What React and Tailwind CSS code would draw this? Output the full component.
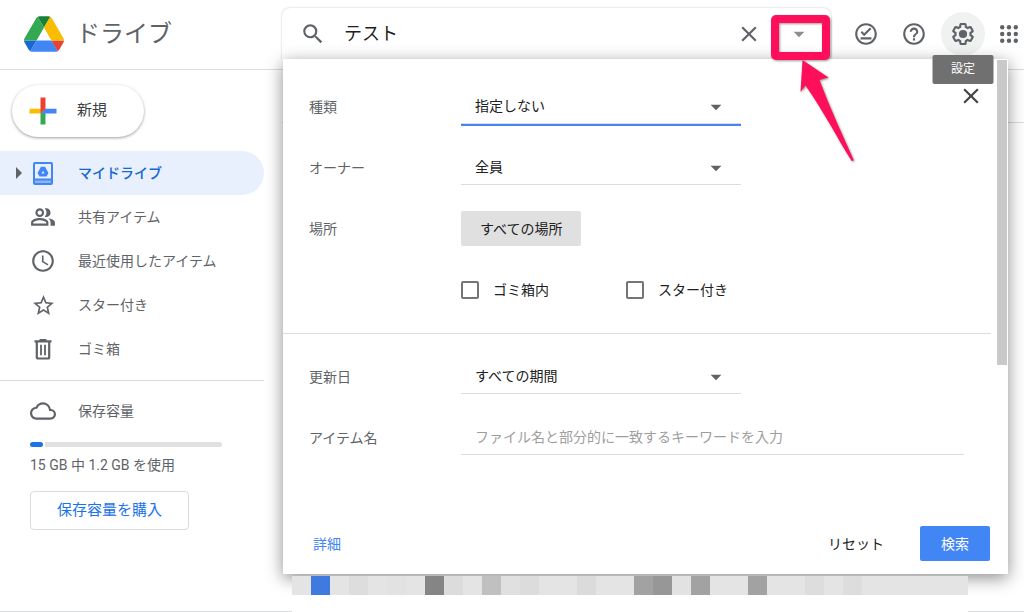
import { useState } from 'react';
import {
  MdAccessTime,
  MdArrowDropDown,
  MdClose,
  MdHelpOutline,
  MdInfoOutline,
  MdOutlineCloud,
  MdOutlineOfflinePin,
  MdOutlinePeopleAlt,
  MdSearch,
  MdStarBorder,
} from 'react-icons/md';

function DriveLogo() {
  return (
    <svg viewBox="0 0 87.3 78" className="w-10 h-9 shrink-0" aria-hidden="true">
      <path fill="#1967d2" d="m6.6 66.85 3.85 6.65c.8 1.4 1.95 2.5 3.3 3.3l13.75-23.8h-27.5c0 1.55.4 3.1 1.2 4.5z" />
      <path fill="#34a853" d="m43.65 25-13.75-23.8c-1.35.8-2.5 1.9-3.3 3.3l-25.4 44a9.06 9.06 0 0 0-1.2 4.5h27.5z" />
      <path fill="#ea4335" d="m73.55 76.8c1.35-.8 2.5-1.9 3.3-3.3l1.6-2.75 7.65-13.25c.8-1.4 1.2-2.95 1.2-4.5h-27.5l5.85 11.5z" />
      <path fill="#188038" d="m43.65 25 13.75-23.8c-1.35-.8-2.9-1.2-4.5-1.2h-18.5c-1.6 0-3.15.45-4.5 1.2z" />
      <path fill="#4285f4" d="m59.8 53h-32.3l-13.75 23.8c1.35.8 2.9 1.2 4.5 1.2h50.8c1.6 0 3.15-.45 4.5-1.2z" />
      <path fill="#fbbc04" d="m73.4 26.5-12.7-22c-.8-1.4-1.95-2.5-3.3-3.3l-13.75 23.8 16.15 28h27.45c0-1.55-.4-3.1-1.2-4.5z" />
    </svg>
  );
}

function PlusIcon() {
  return (
    <svg viewBox="0 0 36 36" className="w-9 h-9 shrink-0" aria-hidden="true">
      <path fill="#34a853" d="M15.500 17v14.500h5V20z" />
      <path fill="#4285f4" d="M31.500 15.800H20l-4.500 4.700h16z" />
      <path fill="#fbbc04" d="M4.500 15.800v4.700h11l4.500-4.700z" />
      <path fill="#ea4335" d="M20.500 15.800V4.500h-5v16z" />
    </svg>
  );
}

function GearIcon() {
  return (
    <svg viewBox="0 0 24 24" fill="currentColor" className="w-[26px] h-[26px]" aria-hidden="true">
      <path d="M13.85 22.25h-3.7c-.74 0-1.36-.54-1.45-1.27l-.27-1.89c-.27-.14-.53-.29-.79-.46l-1.8.72c-.7.26-1.47-.03-1.81-.65L2.2 15.53c-.35-.66-.2-1.44.36-1.88l1.53-1.19c-.01-.15-.02-.3-.02-.46 0-.15.01-.31.02-.46l-1.52-1.19c-.59-.45-.74-1.26-.37-1.88l1.85-3.19c.34-.62 1.11-.9 1.79-.63l1.81.73c.26-.17.52-.32.78-.46l.27-1.91c.09-.7.71-1.25 1.44-1.25h3.7c.74 0 1.36.54 1.45 1.27l.27 1.89c.27.14.53.29.79.46l1.8-.72c.71-.26 1.48.03 1.82.65l1.84 3.18c.36.66.2 1.44-.36 1.88l-1.52 1.19c.01.15.02.3.02.46s-.01.31-.02.46l1.52 1.19c.56.45.72 1.23.37 1.86l-1.86 3.22c-.34.62-1.11.9-1.8.63l-1.8-.72c-.26.17-.52.32-.78.46l-.27 1.91c-.1.68-.72 1.22-1.46 1.22zm-3.23-2h2.76l.37-2.55.53-.22c.44-.18.88-.44 1.34-.78l.45-.34 2.38.96 1.38-2.4-2.03-1.58.07-.56c.03-.26.06-.51.06-.78s-.03-.53-.06-.78l-.07-.56 2.03-1.58-1.39-2.4-2.39.96-.45-.35c-.42-.32-.87-.58-1.33-.77l-.52-.22-.37-2.55h-2.76l-.37 2.55-.53.21c-.44.19-.88.44-1.34.79l-.45.33-2.38-.95-1.39 2.39 2.03 1.58-.07.56a7 7 0 0 0-.06.79c0 .26.02.53.06.78l.07.56-2.03 1.58 1.38 2.4 2.39-.96.45.35c.43.33.86.58 1.33.77l.53.22.38 2.55z" />
      <circle cx="12" cy="12" r="3.8" />
    </svg>
  );
}

function AppsIcon() {
  return (
    <svg viewBox="0 0 18 18" fill="currentColor" className="w-[18px] h-[18px]" aria-hidden="true">
      {[2.2, 9, 15.8].map((y) => [2.2, 9, 15.8].map((x) => <circle key={`${x}-${y}`} cx={x} cy={y} r="2.2" />))}
    </svg>
  );
}

function ExpandIcon() {
  return (
    <svg viewBox="0 0 6 12" fill="currentColor" className="w-[6px] h-3" aria-hidden="true">
      <path d="M0 0v12l6-6z" />
    </svg>
  );
}

function MyDriveIcon() {
  return (
    <svg viewBox="0 0 20 23" fill="none" className="w-5 h-[23px]" aria-hidden="true">
      <path fill="#8ab4f8" d="M2 18h16v3H2z" />
      <rect x="1" y="1" width="18" height="21" rx="1" stroke="#4285f4" strokeWidth="2" />
      <path fill="#4285f4" d="M2 16.500h16V18.500H2z" />
      <path fill="#4285f4" fillRule="evenodd" d="M8 4.800h4l3.500 6.200-2 3.500h-7l-2-3.500zM10 8.800l-1.500 2.700h3z" />
    </svg>
  );
}

function TrashIcon() {
  return (
    <svg viewBox="0 0 18 21" fill="none" stroke="currentColor" className="w-[18px] h-[21px]" aria-hidden="true">
      <path strokeWidth="2.200" d="M.5 2.300h17M2.800 2.500V18q0 1.500 1.500 1.500h9.400q1.500 0 1.500-1.500V2.500" />
      <path strokeWidth="1.800" d="M5.500 1h7M7 5.800v10.500M11 5.800v10.500" />
    </svg>
  );
}

// pink frame round the drop-down button, with its pointer
function Callout() {
  return (
    <svg
      viewBox="0 0 90 152"
      className="absolute -right-[29px] top-[6px] w-[90px] h-[152px] z-30 pointer-events-none drop-shadow-[1px_1px_1px_rgba(0,0,0,0.4)]"
      aria-hidden="true"
    >
      <rect x="5" y="5" width="51" height="37" rx="1" fill="none" stroke="#ff0f5b" strokeWidth="8" strokeLinejoin="round" />
      <path fill="#ff0f5b" d="M32.500 46 58.500 63.500 49.500 66C60 94 72 120 83.500 145.500q0 2-1.800 1.500C66 122 54 98 35.500 71.500L30.500 78z" />
    </svg>
  );
}

const NAV = [
  { label: 'マイドライブ', icon: <MyDriveIcon />, active: true },
  { label: '共有アイテム', icon: <MdOutlinePeopleAlt size={26} /> },
  { label: '最近使用したアイテム', icon: <MdAccessTime size={26} /> },
  { label: 'スター付き', icon: <MdStarBorder size={25} /> },
  { label: 'ゴミ箱', icon: <TrashIcon /> },
];

const MOSAIC = [
  '#e4e4e4', '#3f7ade', '#e4e4e4', '#dddddd', '#e4e4e4', '#e2e2e2', '#e4e4e4', '#858585', '#dcdcdc',
  '#e4e4e4', '#c0c0c0', '#e0e0e0', '#dcdcdc', '#e4e4e4', '#e4e4e4', '#dbdbdb', '#e4e4e4', '#e4e4e4',
  '#a2a2a2', '#979797', '#e2e2e2', '#a2a2a2', '#e4e4e4', '#e4e4e4', '#a2a2a2', '#e4e4e4', '#e4e4e4',
  '#dddddd', '#e4e4e4', '#dddddd', '#e4e4e4', '#e4e4e4', '#e4e4e4', '#e4e4e4', '#e4e4e4', '#e4e4e4',
];

function Row({ label, htmlFor, children }) {
  return (
    <div className="flex items-center h-[61px]">
      {htmlFor ? (
        <label htmlFor={htmlFor} className="w-[152px] shrink-0 text-[#5f6368]">{label}</label>
      ) : (
        <span className="w-[152px] shrink-0 text-[#5f6368]">{label}</span>
      )}
      {children}
    </div>
  );
}

function Select({ id, options, focused }) {
  return (
    <div className={`relative w-[280px] border-b border-[#dadce0] ${focused ? 'shadow-[0_2px_0_#4285f4]' : ''}`}>
      <select id={id} className="appearance-none w-full h-[34px] pl-[14px] pr-10 bg-transparent text-[#202124] outline-none">
        {options.map((o) => (
          <option key={o}>{o}</option>
        ))}
      </select>
      <MdArrowDropDown size={26} className="absolute right-3 top-[5px] text-[#5f6368] pointer-events-none" />
    </div>
  );
}

function Check({ label, className }) {
  return (
    <label className={`flex items-center gap-[14px] text-[#202124] ${className}`}>
      <input type="checkbox" className="appearance-none w-[18px] h-[18px] border-2 border-[#757575] rounded-xs checked:bg-[#4285f4]" />
      {label}
    </label>
  );
}

function SearchOptions() {
  return (
    <div
      role="dialog"
      aria-label="検索オプション"
      className="absolute top-full left-px -right-[177px] z-10 bg-white pt-[17px] pb-[13px] shadow-[0_4px_16px_rgba(0,0,0,0.45)]"
    >
      <button type="button" aria-label="閉じる" className="absolute right-6 top-6 text-[#444]">
        <MdClose size={26} />
      </button>
      <div className="absolute right-px top-px w-[10px] h-[305px] bg-[#c9c9c9]" />

      <div className="pl-[26px] pr-11">
        <Row label="種類" htmlFor="kind">
          <Select id="kind" options={['指定しない', 'フォルダ', 'ドキュメント']} focused />
        </Row>
        <Row label="オーナー" htmlFor="owner">
          <Select id="owner" options={['全員', '自分']} />
        </Row>
        <Row label="場所">
          <button type="button" className="h-[35px] px-[19px] rounded-xs bg-[#e0e0e0] text-[#202124]">
            すべての場所
          </button>
        </Row>
        <Row label="">
          <Check label="ゴミ箱内" className="w-[165px]" />
          <Check label="スター付き" className="" />
        </Row>
      </div>

      <hr className="mt-[13px] mb-3 mr-[17px] border-[#dadce0]" />

      <div className="pl-[26px] pr-11">
        <Row label="更新日" htmlFor="date">
          <Select id="date" options={['すべての期間', '今日', '昨日']} />
        </Row>
        <Row label="アイテム名" htmlFor="name">
          <input
            id="name"
            type="text"
            placeholder="ファイル名と部分的に一致するキーワードを入力"
            className="flex-1 min-w-0 h-[35px] pl-[14px] border-b border-[#dadce0] outline-none placeholder:text-[#9e9e9e]"
          />
        </Row>
      </div>

      <div className="mt-[58px] pl-[30px] pr-[18px] flex items-center">
        <a href="#details" className="text-[#4285f4]">詳細</a>
        <button type="reset" className="ml-auto mr-9 text-[#202124]">リセット</button>
        <button type="submit" className="h-[35px] w-[70px] rounded-xs bg-[#4285f4] text-white">検索</button>
      </div>
    </div>
  );
}

function Header() {
  const [query, setQuery] = useState('テスト');

  return (
    <header className="flex h-[70px] border-b border-[#dadce0]">
      <a href="#home" className="w-[282px] shrink-0 flex items-center gap-3 pl-6 pb-[2px] text-[#5f6368]">
        <DriveLogo />
        <span className="text-2xl">ドライブ</span>
      </a>

      <form className="relative flex-1 min-w-0 mt-2 h-[51px]" onSubmit={(e) => e.preventDefault()}>
        <div className="flex items-center h-full pl-[18px] pr-[19px] bg-white rounded-t-lg shadow-[0_0_2px_rgba(60,64,67,0.35)] text-[#5f6368]">
          <button type="submit" aria-label="検索"><MdSearch size={26} /></button>
          <input
            type="text"
            aria-label="ドライブで検索"
            value={query}
            onChange={(e) => setQuery(e.target.value)}
            className="flex-1 min-w-0 ml-[18px] text-lg text-[#202124] outline-none"
          />
          <button type="button" aria-label="クリア" onClick={() => setQuery('')}><MdClose size={26} /></button>
          <button type="button" aria-label="検索オプションを表示" className="ml-6 text-[#8a8d91]"><MdArrowDropDown size={26} /></button>
        </div>
        <SearchOptions />
        <Callout />
      </form>

      <div className="w-[193px] shrink-0 flex items-center pl-[22px] pb-[2px] text-[#5f6368]">
        <button type="button" aria-label="オフライン"><MdOutlineOfflinePin size={26} /></button>
        <button type="button" aria-label="サポート" className="ml-[22px]"><MdHelpOutline size={26} /></button>
        <div className="relative ml-[14px] shrink-0">
          <button type="button" aria-describedby="settings-tip" aria-label="設定" className="w-11 h-11 rounded-full bg-[#f0f2f2] flex items-center justify-center">
            <GearIcon />
          </button>
          <span
            id="settings-tip"
            role="tooltip"
            className="absolute left-1/2 -translate-x-1/2 top-[43px] z-30 w-[61px] h-[29px] flex items-center justify-center rounded-xs bg-[#707070] text-xs text-white"
          >
            設定
          </span>
        </div>
        <button type="button" aria-label="Google アプリ" className="ml-[15px] shrink-0"><AppsIcon /></button>
      </div>
    </header>
  );
}

function Sidebar() {
  return (
    <aside className="w-[282px] shrink-0 pr-[18px] border-b border-[#dadce0] text-[#5f6368]">
      <button
        type="button"
        className="mt-[15px] ml-3 w-[132px] h-[52px] pl-[13px] flex items-center gap-4 rounded-full bg-white text-[15px] text-[#3c4043] shadow-[0_1px_3px_rgba(60,64,67,0.5)]"
      >
        <PlusIcon />
        新規
      </button>

      <nav className="mt-[14px]">
        {NAV.map(({ label, icon, active }) => (
          <a
            key={label}
            href="#nav"
            className={`flex items-center h-11 rounded-r-full ${active ? 'bg-[#e8f0fe] text-[#1967d2] font-medium' : ''}`}
          >
            <span className="w-7 pl-4 text-[#5f6368]">{active && <ExpandIcon />}</span>
            <span className="w-[30px] mr-5 flex justify-center text-[#5f6368]">{icon}</span>
            {label}
          </a>
        ))}
      </nav>

      <hr className="mt-[9px] border-[#dadce0]" />

      <div className="pl-[30px] pt-[17px]">
        <a href="#storage" className="flex items-center gap-[22px]">
          <MdOutlineCloud size={26} />
          保存容量
        </a>
        <div className="mt-[18px] mr-[42px] h-[5px] flex gap-[2px]">
          <div className="w-[13px] rounded-full bg-[#1a73e8]" />
          <div className="flex-1 rounded-r-full bg-[#e0e0e0]" />
        </div>
        <p className="mt-2 leading-5">15 GB 中 1.2 GB を使用</p>
        <button type="button" className="mt-4 w-[159px] h-[39px] rounded-sm border border-[#dadce0] text-[15px] text-[#1a73e8]">
          保存容量を購入
        </button>
      </div>
    </aside>
  );
}

export default function App() {
  return (
    <div className="min-h-screen flex flex-col bg-white overflow-x-hidden text-sm font-[Roboto,'Noto_Sans_CJK_JP',sans-serif]">
      <Header />
      <div className="flex flex-1">
        <Sidebar />
        <main className="flex-1 min-w-0 flex flex-col">
          <div className="h-[53px] flex items-center justify-end pr-[14px] border-b border-[#dadce0] text-[#5f6368]">
            <button type="button" aria-label="詳細を表示"><MdInfoOutline size={24} /></button>
          </div>
          <div className="flex-1" />
          <div className="flex h-9">
            <div className="w-[10px] border-b border-[#dadce0]" />
            <div className="relative z-20 flex-1 min-w-0 bg-white">
              <div className="flex h-[19px] overflow-hidden">
                {MOSAIC.map((color, i) => (
                  <div key={i} className="w-[19px] shrink-0" style={{ backgroundColor: color }} />
                ))}
              </div>
            </div>
            <div className="w-14 border-b border-[#dadce0]" />
          </div>
        </main>
      </div>
    </div>
  );
}
